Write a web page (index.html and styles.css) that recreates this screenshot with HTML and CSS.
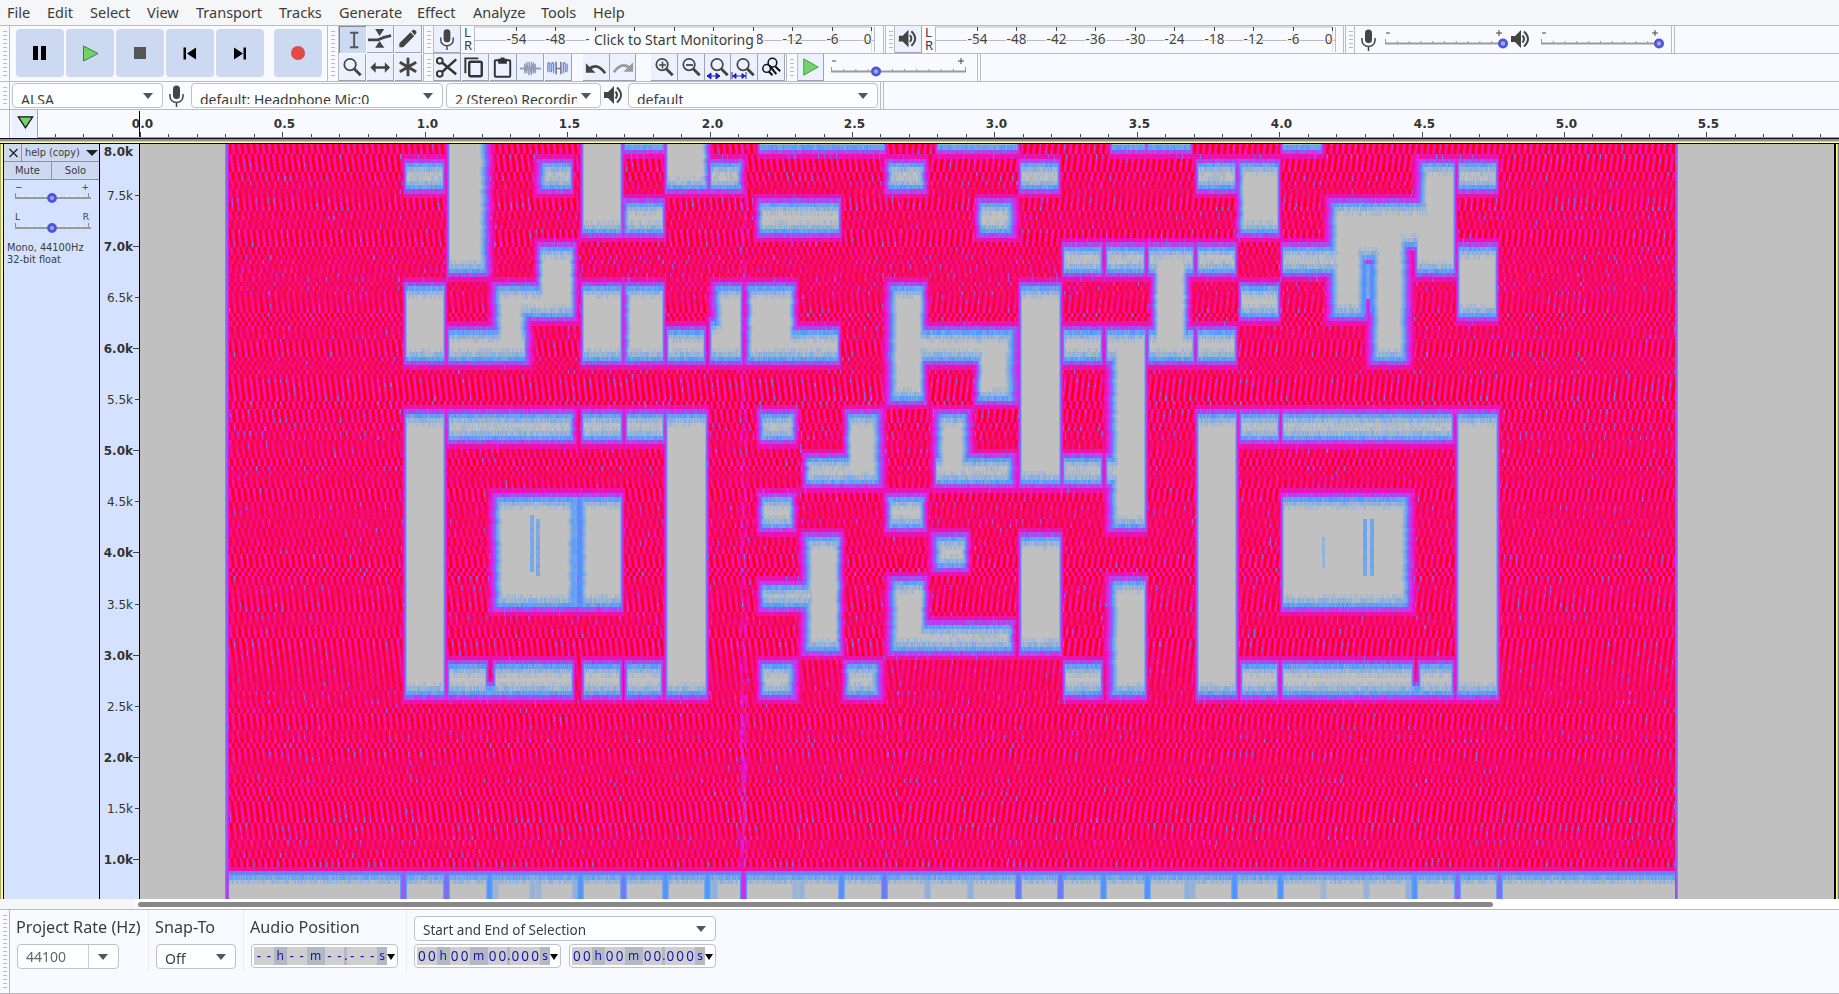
FILE: index.html
```html
<!DOCTYPE html>
<html lang="en">
<head>
<meta charset="utf-8">
<title>Audacity</title>
<link rel="stylesheet" href="styles.css">
</head>
<body>
<svg class="defs" width="0" height="0">
  <symbol id="mic" viewBox="0 0 27 27"><rect x="10" y="3.5" width="7" height="13.5" rx="3.5" fill="#444"/><path d="M7 12v2.5a6.5 6 0 0 0 13 0V12M13.500 20.500V25" fill="none" stroke="#444" stroke-width="1.500"/></symbol>
  <symbol id="spk" viewBox="0 0 27 27"><path d="M4 10h4l6-6v18l-6-6H4z" fill="#444"/><path d="M15.500 9.500q3 3.500 0 7M17 5.500q8 7.500 0 15" fill="none" stroke="#444" stroke-width="2"/></symbol>
  <symbol id="mag" viewBox="0 0 27 27"><circle cx="11.500" cy="11" r="6" fill="none" stroke="#444" stroke-width="1.800"/><path d="M16 15.500l6.500 6.500" stroke="#444" stroke-width="3"/></symbol>
</svg>
<nav class="menu"><span style="width:40px">File</span><span style="width:43px">Edit</span><span style="width:57px">Select</span><span style="width:49px">View</span><span style="width:83px">Transport</span><span style="width:60px">Tracks</span><span style="width:78px">Generate</span><span style="width:56px">Effect</span><span style="width:68px">Analyze</span><span style="width:52px">Tools</span><span>Help</span></nav>

<section class="tools">
  <div class="grab"></div>
  <div class="transport">
    <b><svg viewBox="0 0 48 48"><path d="M17 17h5v14h-5zM25 17h5v14h-5z"/></svg></b>
    <b><svg viewBox="0 0 48 48"><path d="M17.500 17v15l14.500-7.500z" fill="#73d26b" stroke="#3f7f3b"/></svg></b>
    <b><svg viewBox="0 0 48 48"><path d="M18 18h12v12H18z" fill="#555"/></svg></b>
    <b><svg viewBox="0 0 48 48"><path d="M17.500 18.500h2.500v12h-2.500zM30 18.500v12l-9-6z"/></svg></b>
    <b><svg viewBox="0 0 48 48"><path d="M18 18.500l9 6-9 6zM27.500 18.500H30v12h-2.500z"/></svg></b>
    <b class="rec"><svg viewBox="0 0 48 48"><circle cx="24" cy="24" r="7" fill="#e04a48"/></svg></b>
  </div>
  <div class="grab tall"></div>
  <div class="toolgrid">
    <i class="btn on"><svg viewBox="0 0 27 27"><path d="M10.500 6h8.500M10.500 21h8.500M14.700 6v15" stroke="#555" stroke-width="2" fill="none"/></svg></i>
    <i class="btn"><svg viewBox="0 0 27 27"><path d="M8.500 3h9.500L13 10.500zM8.500 22.500h9.500l-5-7z" fill="#444"/><path d="M1 14.500H11q6-3 14-4.500" stroke="#444" stroke-width="2.800" fill="none"/></svg></i>
    <i class="btn"><svg viewBox="0 0 27 27"><path d="M4.500 22v-4L16 6.500l4 4L8.500 22zM17 5.500L19 4q1-.5 2 .5l1 1q.8 1 0 2l-1.500 2z" fill="#444"/></svg></i>
    <i class="btn"><svg><use href="#mag"/></svg></i>
    <i class="btn"><svg viewBox="0 0 27 27"><path d="M3.500 14L9 8.500v4.200h9.500V8.500L24 14l-5.500 5.500v-4.200H9v4.200z" fill="#444"/></svg></i>
    <i class="btn"><svg viewBox="0 0 27 27"><path d="M13.500 4v19M5 8.500l17 10M22 8.500l-17 10" stroke="#444" stroke-width="3" fill="none"/></svg></i>
  </div>
  <div class="right">
    <div class="row">
      <div class="grab w11"></div>
      <i class="btn"><svg><use href="#mic"/></svg></i>
      <div class="lr"><span>L</span><span>R</span></div>
      <div class="meter" data-first="41.500"><em>Click to Start Monitoring</em></div>
      <div class="grab w11 m6"></div>
      <i class="btn"><svg><use href="#spk"/></svg></i>
      <div class="lr"><span>L</span><span>R</span></div>
      <div class="meter" data-first="41.500"></div>
      <div class="grab w13 m3"></div>
      <svg class="ico"><use href="#mic"/></svg>
      <div class="slider" data-w="122" data-n="10" data-k="120"></div>
      <svg class="ico sp"><use href="#spk"/></svg>
      <div class="slider" data-w="122" data-n="10" data-k="120"></div>
      <div class="end"></div>
    </div>
    <div class="row">
      <div class="grab w11"></div>
      <i class="btn e"><svg viewBox="0 0 27 27"><path d="M8 7.500l15 12.500M8 18L23 4.500" stroke="#333" stroke-width="2.600"/><circle cx="6" cy="6" r="3" fill="none" stroke="#333" stroke-width="2"/><circle cx="6" cy="19.500" r="3" fill="none" stroke="#333" stroke-width="2"/></svg></i>
      <i class="btn e"><svg viewBox="0 0 27 27"><path d="M3.500 19V3.500H17" fill="none" stroke="#333" stroke-width="2"/><rect x="7.500" y="7" width="13" height="15" rx="1.500" fill="none" stroke="#333" stroke-width="2.500"/></svg></i>
      <i class="btn e"><svg viewBox="0 0 27 27"><rect x="5" y="5.500" width="16" height="17" rx="1" fill="none" stroke="#333" stroke-width="2"/><path d="M8.500 4h9v5h-9zM11 2.500h4v3h-4z" fill="#333"/></svg></i>
      <i class="btn e"><svg viewBox="0 0 27 27"><path d="M3 14h5M19 14h6" stroke="#8fa0c8" stroke-width="2"/><path d="M8 19V9l2 10V7l2.500 14V7L15 21V7l2 12V8l2 11V9" fill="none" stroke="#929bb5" stroke-width="1.300"/></svg></i>
      <i class="btn e"><svg viewBox="0 0 27 27"><path d="M3 18V9q1.500-2 2 0v7q1 3 2 0V9q1-2 2 0v10M19 19V9q1-2 2 0v7q1 3 2 0V9" fill="none" stroke="#6f7fe0" stroke-width="1.300"/><path d="M11.500 7v13M16.500 7v13M11 14h6" stroke="#777" stroke-width="1.600"/></svg></i>
      <i class="btn g1"><svg viewBox="0 0 27 27"><path d="M6 15q8-8 17 4" fill="none" stroke="#444" stroke-width="2.800"/><path d="M3 8.500v10h10z" fill="#444"/></svg></i>
      <i class="btn"><svg viewBox="0 0 27 27"><path d="M21 15q-8-8-17 4" fill="none" stroke="#999" stroke-width="2.800"/><path d="M24 8.500v10H14z" fill="#999"/></svg></i>
      <i class="btn g2"><svg><use href="#mag"/><path d="M8 11h7M11.500 7.500v7" stroke="#444" stroke-width="1.500"/></svg></i>
      <i class="btn"><svg><use href="#mag"/><path d="M8 11h7" stroke="#444" stroke-width="1.800"/></svg></i>
      <i class="btn"><svg><use href="#mag" x="1"/><path d="M2 22h13M6 19l-4 3 4 3zM11 19l4 3-4 3z" stroke="#22b" fill="#22b"/></svg></i>
      <i class="btn"><svg><use href="#mag" x="1"/><path d="M1 18v7M15 18v7M1 22h14M5 19.500L2 22l3 2.500zM11 19.500l3 2.500-3 2.500z" stroke="#22b" fill="#22b"/></svg></i>
      <i class="btn"><svg viewBox="0 0 27 27"><circle cx="9" cy="15" r="4" fill="none" stroke="#111" stroke-width="1.600"/><circle cx="15" cy="9" r="4.500" fill="none" stroke="#111" stroke-width="1.600"/><path d="M11 18l4 4M18 13l5 5M12 12l7 9" stroke="#111" stroke-width="2.200"/></svg></i>
      <div class="grab w13"></div>
      <i class="btn"><svg viewBox="0 0 27 27"><path d="M6 5v17l15-8.500z" fill="#73d26b" stroke="#3f9f3b"/></svg></i>
      <div class="slider sp2" data-w="138" data-n="11" data-k="47"></div>
      <div class="end"></div>
    </div>
  </div>
</section>

<section class="device">
  <div class="grab"></div>
  <div class="combo d1"><span>ALSA</span><u></u></div>
  <svg class="ico"><use href="#mic"/></svg>
  <div class="combo d2"><span>default: Headphone Mic:0</span><u></u></div>
  <div class="combo d3"><span>2 (Stereo) Recordin</span><u></u></div>
  <svg class="ico"><use href="#spk"/></svg>
  <div class="combo d4"><span>default</span><u></u></div>
  <div class="end"></div>
</section>

<section class="ruler">
  <div class="pin"><svg viewBox="0 0 26 26"><path d="M6.500 6h15l-7.500 11.500z" fill="#73d26b" stroke="#111" stroke-width="1.300"/></svg></div>
  <svg class="scale" id="time"></svg>
</section>

<section class="track">
  <div class="panel">
    <div class="thead"><b><svg viewBox="0 0 17 17"><path d="M5.500 5l8 8M13.500 5l-8 8" stroke="#222" stroke-width="1.300"/></svg></b><span>help (copy)</span><svg class="dd" viewBox="0 0 12 8"><path d="M0 1h12L6 7z" fill="#222"/></svg></div>
    <div class="ms"><span>Mute</span><span>Solo</span></div>
    <div class="ts"><div><span>−</span><span>+</span></div><svg class="tsl"></svg></div>
    <div class="ts two"><div><span>L</span><span>R</span></div><svg class="tsl"></svg></div>
    <p>Mono, 44100Hz<br>32-bit float</p>
  </div>
  <svg class="vr" id="freq"></svg>
  <canvas id="spec" width="1694" height="755"></canvas>
  <div class="redge"></div>
</section>
<div class="scroll"><div></div></div>

<section class="bottom">
  <div class="grab"></div>
  <div class="col c1"><h4>Project Rate (Hz)</h4><div class="combo rate"><span>44100</span><u></u></div></div>
  <div class="col c2"><h4>Snap-To</h4><div class="combo off"><span>Off</span><u></u></div></div>
  <div class="col c3"><h4>Audio Position</h4><div class="time" data-t="-- h-- m--.--- s"></div></div>
  <div class="col c4"><div class="combo sel"><span>Start and End of Selection</span><u></u></div><div class="pair"><div class="time" data-t="00 h00 m00.000 s"></div><div class="time" data-t="00 h00 m00.000 s"></div></div></div>
</section>
<script src="app.js"></script>
</body>
</html>
```

FILE: styles.css
```css
*{box-sizing:border-box}
body{margin:0;width:1839px;height:994px;overflow:hidden;background:#f8faff;color:#3c3c3c;font-family:"Noto Sans","DejaVu Sans",sans-serif;display:flex;flex-direction:column}
svg{display:block}
.defs{display:none}
.menu{height:26px;flex:none;background:#f5f6f7;border-bottom:1px solid #bbb;display:flex;padding-left:7px;font-size:14.500px;line-height:25px;white-space:nowrap}
.tools{height:56px;flex:none;display:flex;border-bottom:1px solid #bbb}
.grab{flex:none;width:10px;border-right:1px solid #bbb;background:repeating-linear-gradient(#bbb 0 1px,transparent 1px 4px) 3px 5px/4px calc(100% - 8px) no-repeat}
.grab.tall{width:12px;border-left:1px solid #bbb;margin-left:5px}
.w11{width:11px;border-left:1px solid #bbb}
.w13{width:12px;border-left:1px solid #bbb}
.m6{margin-left:6px;border-left:3px double #bbb;width:12px}
.m3{margin-left:5px;border-left:3px double #bbb}
.transport{display:flex;gap:2px;padding:3px 0 0 6px}
.transport b{width:48px;height:48px;border-radius:4px;background:#cdd9f1}
.transport .rec{margin-left:8px}
.toolgrid{display:grid;grid-template-columns:28px 28px 28px;grid-template-rows:28px 27px}
.btn{flex:none;width:27px;height:27px;background:#ebf1ff;border-right:1px solid #9aa3b8;border-bottom:1px solid #9aa3b8;display:block}
.btn svg{width:26px;height:26px}
.btn.on{background:#cdd9f1;border:0;border-left:1px solid #8089a0;border-top:1px solid #8089a0}
.right{flex:1}
.row{height:28px;display:flex;border-bottom:1px solid #bbb}
.row+.row{height:27px;border:0}
.lr{width:13px;flex:none;font-size:13px;line-height:13px;padding-left:3px;display:flex;flex-direction:column}
.meter{width:403px;flex:none;position:relative}
.meter em{position:absolute;left:115px;top:5px;width:168px;height:18px;background:#fcfdff;border-radius:2px;font:14px/18px "Noto Sans",sans-serif;padding-left:5px;white-space:nowrap}
.ico{width:27px;height:27px;flex:none;margin-left:2px}
.row .ico{margin-left:0}
.row .ico+.slider{margin-left:1px}
.row .sp{margin:0 0 0 -3px}
.row .sp+.slider{margin-left:5px}
.end{width:4px;margin-left:5px;border-left:1px solid #bbb;border-right:1px solid #bbb}
.row+.row .btn{width:26.700px}
.row+.row .e{width:27px;margin-right:.8px}
.row+.row .e svg,.row+.row .g1 svg{margin-top:1px}
.row+.row .g1{margin-left:10px}
.row+.row .g2{margin-left:15px}
.row+.row .w13{margin-left:1px}
.sp2{margin-left:5px}
.slider{flex:none}
.device{height:28px;flex:none;display:flex;border-bottom:1px solid #bbb;align-items:stretch}
.combo{background:#fdfeff;border:1px solid #bcc1ca;border-radius:4px;height:25px;display:flex;justify-content:space-between;font-size:14px;overflow:hidden;white-space:nowrap;flex:none}
.combo span{flex:1;overflow:hidden;height:20px;line-height:31px;padding-left:8px}
.combo u{width:0;height:0;border:5px solid transparent;border-top:6px solid #555;border-bottom:0;margin:9px 9px 0 4px;flex:none}
.device .combo{margin-top:1px}
.d1{width:151px;margin-left:2px}
.d1+.ico{margin:0 1px 0 0}
.d2{width:252px}
.d3{width:155px;margin-left:3px}
.d3+.ico{margin:0 0 0 -1px}
.d4{width:250px;margin-left:1px}
.device .end{margin-left:2px}
.ruler{height:28px;flex:none;display:flex}
.pin{width:38px;padding:1px 0 1px 12px;flex:none;border-right:1px solid #9aa3b8;background:linear-gradient(90deg,transparent 9px,#bbb 9px 10px,transparent 10px 12px,#ebf1ff 12px)}
.scale{width:1801px;height:28px}
.track{height:761px;flex:none;display:flex;border-top:6px solid;border-image:linear-gradient(#111 0 1px,#8f8f99 1px 3px,#d6d38f 3px 4px,#ffff80 4px 5px,#000 5px) 6 0 0 0 / 6px 0 0 0}
.panel{width:100px;flex:none;background:linear-gradient(90deg,#a9a96a 0 1px,#ffff80 1px 3px,#000 3px 4px,#d5e2ff 4px 99px,#000 99px);padding-left:4px;font:11px "DejaVu Sans",sans-serif;color:#3b3b3b}
.thead{display:flex;width:95px;height:18px;background:#cdd9f1;border-bottom:1px solid #8a92a6;line-height:17px;font-size:10px}
.thead b{width:18px;border-right:1px solid #8a92a6}
.thead span{padding-left:3px;width:64px;white-space:nowrap;font-size:9.700px}
.dd{width:12px;height:8px;margin-top:5px}
.ms{display:flex;width:95px;height:18px;border-bottom:1px solid #8a92a6;background:#cdd9f1;font-size:10px;line-height:17px;text-align:center}
.ms span{flex:1}.ms span:first-child{border-right:1px solid #8a92a6}
.ts{height:29px;padding:1px 11px 0 11px;font-size:9px;line-height:12px}
.ts.two{height:30px;padding-top:2px}
.ts div{display:flex;justify-content:space-between;width:74px;height:10px}
.tsl{width:78px;height:15px;margin-top:-2px}
.panel p{margin:3px 0 0 3px;font-size:9.800px;line-height:12px;white-space:nowrap}
.vr{width:40px;height:755px;background:#d5e2ff;flex:none}
canvas{display:block;flex:none;width:1694px;height:755px}
.redge{flex:1;background:linear-gradient(90deg,#000 0 2px,#ffff80 2px 3px,#d6d38f 3px 4px,#777799 4px)}
.scroll{height:11px;flex:none;border-bottom:1px solid #bbb;background:linear-gradient(90deg,#f5f6f7 135px,#fff 135px);padding:3px 0 0 138px}
.scroll div{width:1355px;height:5px;border-radius:3px;background:#888}
.bottom{flex:1;display:flex;border-bottom:1px solid #bbb}
.col{padding:6px 0 0 7px;border-right:1px solid #e9ecf2}
.col h4{margin:0 0 0 -1px;font-weight:400;font-size:16.200px;line-height:23px;height:28px;white-space:nowrap}
.c1{width:139px}.c2{width:95px}.c3{width:163px}.c4{width:320px}
.bottom .col{height:62px}
.bottom .c4{border:0}
.rate{width:102px;color:#666}
.off{width:80px}
.bottom .combo span{height:23px}
.bottom .off span{line-height:27px}
.bottom .rate span{line-height:23px;border-right:1px solid #ccc;margin-right:5px}
.rate u{margin-right:10px}
.sel{width:302px;margin:0 0 3px;font-size:13.500px}
.bottom .sel span{line-height:27px}
.pair{display:flex;gap:8px}
.time{width:147px;height:24px;border:1px solid #bcc1ca;border-radius:4px;background:#fff;padding:2px;display:flex;font:13.500px/18px "Noto Sans",sans-serif;color:#1515b5}
.time span{background:#cfcfcf;text-align:center;height:18px;flex:none;overflow:hidden}
.time .s{background:#b3b8c3;font-size:12px}
.time u{width:0;border:4px solid transparent;border-top:6px solid #000;border-bottom:0;height:0;margin-top:7px}
```

FILE: app.js
```javascript
const $ = (s) => [...document.querySelectorAll(s)];
const line = (x, y, x2, y2, c = '#444', w = 1) => `<line x1="${x}" y1="${y}" x2="${x2}" y2="${y2}" stroke="${c}" stroke-width="${w}"/>`;

// sliders
$('.slider').forEach((e) => {
  const w = +e.dataset.w, n = +e.dataset.n, k = +e.dataset.k;
  let s = line(2, 17.500, w - 1, 17.500, '#999b99', 2) + line(3, 7, 7, 7) + line(w - 9, 7, w - 3, 7) + line(w - 6, 4, w - 6, 10);
  for (let i = 0; i <= n; i++) { const x = 2.500 + i * (w - 4) / n; s += line(x, i % n ? 15 : 13, x, 17, '#999'); }
  s += `<circle cx="${k}" cy="17.500" r="3.600" fill="#aab" stroke="#4a55e8" stroke-width="2.800"/>`;
  e.innerHTML = `<svg width="${w + 5}" height="26">${s}</svg>`;
});
$('.tsl').forEach((e) => {
  let s = line(0, 9, 76, 9, '#999b99', 2);
  for (let i = 0; i <= 10; i++) { const x = .5 + i * 7.300; s += line(x, i % 10 ? 6 : 4, x, 8, i % 10 ? '#fff' : '#888'); }
  e.innerHTML = s + '<circle cx="37" cy="9" r="3.500" fill="#aab" stroke="#4a55e8" stroke-width="2.800"/>';
});

// level meters
$('.meter').forEach((e) => {
  const f = +e.dataset.first;
  let s = line(0, 1, 397, 1, '#bbb') + line(.5, 1, .5, 26, '#bbb') + line(0, 14.500, 400, 14.500, '#bbb') + line(400.500, 1, 400.500, 26, '#bbb') + line(397.500, 1, 397.500, 26, '#ddd');
  for (let i = 0; i < 10; i++) {
    const x = Math.round(f + i * 39.550) + .5, t = i * 6 - 54;
    s += line(x, 1, x, 5) + `<text x="${i === 9 ? x - 4 : x}" y="18" text-anchor="middle" font-size="13.500" fill="#444" stroke="#f8faff" stroke-width="2" paint-order="stroke">${t}</text>`;
  }
  e.insertAdjacentHTML('afterbegin', `<svg width="403" height="27">${s}</svg>`);
});

// time ruler
let s = '';
for (let i = -3; i < 60; i++) {
  const x = Math.round(140 + i * 28.480 - 38) + .5;
  s += line(x, i % 5 ? 24 : 22, x, 28);
  if (i >= 0 && i % 5 === 0) s += `<text x="${x + 2}" y="18" text-anchor="middle" font-family="DejaVu Sans" font-weight="700" font-size="12" fill="#333">${(i / 10).toFixed(1)}</text>`;
}
document.getElementById('time').innerHTML = s + line(101.500, 1, 101.500, 28, '#000') + line(0, 27.500, 1801, 27.500, '#999');

// frequency ruler
s = line(39.500, 0, 39.500, 755, '#000');
for (let i = 0; i < 15; i++) {
  const y = Math.round(i * 51.060), v = (8 - i / 2).toFixed(1);
  if (i) s += line(i % 2 ? 35 : 33, y + .5, 39, y + .5);
  s += `<text x="33" y="${i ? y + 5 : 12}" text-anchor="end" font-family="DejaVu Sans" font-size="12" fill="#333" font-weight="${i % 2 ? 400 : 700}">${v}k</text>`;
}
document.getElementById('freq').innerHTML = s;

// time fields
$('.time').forEach((e) => {
  const w = { h: 13, m: 18, s: 10, '.': 3 };
  e.innerHTML = [...e.dataset.t].filter((c) => c !== ' ').map((c) => `<span${w[c] ? ' class="s"' : ''} style="width:${w[c] || 9.900}px">${c}</span>`).join('') + '<u></u>';
});

// spectrogram: silent blocks as [x0, y0, x1, y1, softLeft, softRight]
const T = 130, blocks = [
  [406,161,443,190],[449,T,485,273,1,3],[542,161,571,190,3,1],[583,T,621,232],[625,T,663,150],[667,T,706,191,1,2],[711,161,740,190,1,2],
  [626,204,663,232,2,1],[760,204,839,232,2,1],[760,T,884,150],[938,T,1017,150],[1112,T,1145,150],[1148,T,1190,150],[1283,T,1321,150],
  [540,247,573,315,2,2],[498,287,573,315,3,2],[497,287,525,360,3,3],[449,328,525,360],[406,287,444,360],[583,287,621,360],[627,287,663,360,2,1],
  [668,329,704,360],[717,287,741,360,3,1],[711,322,741,360],[749,287,793,360,2,2],[749,329,838,360,2,1],
  [889,161,923,190,2,2],[980,204,1011,232,2,3],[1021,161,1058,190],[1198,161,1235,190],[1241,161,1278,232,2,1],
  [1064,247,1101,273],[1107,247,1144,273],[1149,247,1193,273],[1155,247,1186,360,2,2],[1149,329,1193,360],[1198,247,1235,273],[1198,329,1235,360],
  [1283,247,1345,273],[1241,288,1278,316],[892,287,923,400,3,2],[905,329,1012,360,2,3],[979,329,1012,400,2,4],[1021,287,1060,483],
  [1064,329,1101,360],[1107,329,1145,360],[1113,329,1145,527,3,1],[939,413,966,483,3,3],[936,457,1011,483,1,3],[848,413,878,483,2,3],[807,457,878,483,2,3],
  [1064,457,1101,483],[1107,457,1130,483],[889,497,923,527,2,2],[1198,413,1236,694],[1241,413,1278,440],[1283,413,1452,440],
  [1283,497,1407,607,1,3],[1458,413,1497,694],[1242,665,1277,694],[1283,665,1412,694],[1420,665,1452,694],[1400,688,1430,694],
  [1333,204,1404,258,3,2],[1333,204,1453,245,3,1],[1333,204,1363,316,3,3],[1374,204,1405,360,3,3],[1422,161,1454,273,3,1],[1417,204,1454,273],
  [1325,247,1345,273],[1459,161,1496,190],[1459,247,1496,315],[406,413,444,694],[449,413,572,440,1,2],[583,413,621,440],[627,413,663,440],
  [667,413,706,694],[497,497,573,607,3,3],[582,497,621,607,3,1],[449,665,486,694],[495,665,572,694],[470,688,510,694],[584,665,620,694],[627,665,661,694],
  [762,413,793,440,2,2],[762,497,792,527,2,2],[807,538,839,650,3,2],[762,583,825,607,2,1],[762,665,792,694,2,3],[847,665,877,694,2,3],
  [937,538,965,568,3,2],[893,581,924,650,3,2],[893,624,1011,650,3,2],[1021,538,1060,650],[1065,665,1101,694],[1113,581,1145,694,3,1],
];
// narrow faint bands: [x0, x1, y0, y1, level]
const marks = [[530,534,515,572,.2],[536,540,519,578,.2],[1322,1325,533,568,.12],[1363,1367,519,576,.22],[1370,1374,519,576,.22],[573,577,497,607,.24],[577,582,497,607,.36],[1363,1366,261,316,.36],[1366,1370,261,300,.24],[1370,1373,261,316,.38]];
const walls = [[403,.5],[446,.47],[489,.34],[495,.1],[532,.12],[538,.1],[575,.14],[580,.35],[623,.42],[665,.35],[707,.34],[714,.14],[743,.62],[795,.1],[801,.12],[841,.36],[884,.44],[927,.14],[970,.14],[1018,.44],[1060,.44],[1103,.36],[1147,.36],[1187,.14],[1192,.12],[1234,.36],[1280,.36],[1323,.1],[1366,.12],[1408,.14],[1414,.35],[1457,.45],[1499,.45]];

let seed = 7;
const rnd = () => { seed = (seed * 1664525 + 1013904223) >>> 0; return seed / 4294967296; };
const stops = [[192,192,192],[76,153,255],[230,25,229],[255,0,0]];
const colour = (v) => { v = Math.max(0, Math.min(.999, v)) * 3; const i = v | 0, f = v - i; return stops[i].map((a, k) => a + (stops[i + 1][k] - a) * f); };
const ROW = 4.397, snap = (y) => Math.round((871 - y) / ROW);

const edge = (d) => d < 0 ? .33 + d * .17 : .36 + (d + .5) * .14;
const rows = (d) => d < 0 ? [.27, .12, .03][-d - 1] ?? 0 : [.54, .75][d] ?? 2;
const cv = document.getElementById('spec'), ctx = cv.getContext('2d'), img = ctx.createImageData(1694, 755);
const B = blocks.map(([a, b, c, d, l = 1, r = 1]) => ({ a, c, l, r, top: snap(b), bot: snap(d) }));
let phase = 0;
for (let k = -7; k < 167; k++) {
  const ya = Math.max(144, Math.round(871 - (k + 1) * ROW)), yb = Math.min(899, Math.round(871 - k * ROW));
  if (yb <= 144 || ya >= 899) continue;
  phase += rnd() < .38 ? .35 + rnd() * .3 : .09;
  const amp = .055 + .085 * (1 + Math.sin(k * .55 + Math.sin(k * .21) * 2)) / 2, spike = rnd() < .35 ? .22 : .05;
  const wob = B.map(() => (rnd() - .5) * 1.600);
  for (let x = 140; x < 1834; x++) {
    let v = 0;
    const rowNoise = rnd();
    if (x >= 225 && x < 1678) {
      const cyc = Math.cos(2 * Math.PI * (x / 6.060 + phase * (x > 900 ? -1 : 1)));
      v = .85 + amp * cyc + (rnd() - .5) * .06;
      if (cyc < -.7 && rnd() < spike) v -= .1 + rnd() * .2;
      if (Math.abs(x - 743) < 4 && rnd() < .65) v -= k < 40 ? .15 : .08;
      B.forEach((b, i) => {
        if (x < b.a - 22 || x > b.c + 22 || k > b.top + 4 || k < b.bot - 4) return;
        const dr = Math.max(k - b.top, b.bot - 1 - k);
        let r = rows(dr);
        if (r > .02 && r < .6) r += (rowNoise - .5) * .15;
        const el = b.a - x - 1 + (b.l > 1 ? wob[i] : 0), er = x - b.c + (b.r > 1 ? wob[i] : 0);
        const e = Math.max(edge(el / b.l), edge(er / b.r));
        v = Math.min(v, Math.max(r, e, 0));
      });
      for (const m of marks) if (x >= m[0] && x < m[1] && ya >= m[2] && yb <= m[3]) v = m[4] + (rnd() - .5) * .08;
      if (k < 0) {
        v = k === -1 ? .4 : k === -2 ? .15 + rowNoise * .15 : k === -3 ? rowNoise * .16 : 0;
        for (const [w, l] of walls) { const d = Math.abs(x - w); if (d < 4) v = Math.max(v, l * (1 - Math.max(0, d - 1.500) * .28)); }
      } else if (k === 0) v = .77;
      if (x < 229) v = Math.min(v, [.33, .45, .58, .68][x - 225]);
      if (x > 1674) v = [.6, .5, .33][x - 1675];
      if (k < 0 && x < 229) v = [.4, .55, .6, .5][x - 225];
    }
    const c = colour(v);
    for (let y = ya; y < yb; y++) { const o = ((y - 144) * 1694 + x - 140) * 4; img.data[o] = c[0]; img.data[o + 1] = c[1]; img.data[o + 2] = c[2]; img.data[o + 3] = 255; }
  }
}
ctx.putImageData(img, 0, 0);
```
